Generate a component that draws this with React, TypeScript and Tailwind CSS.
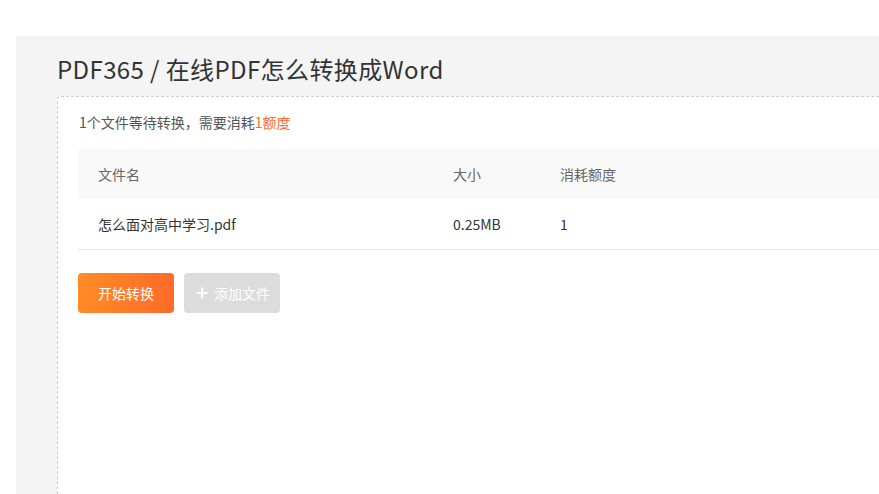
import { Plus } from 'lucide-react';

const font = { fontFamily: '"Noto Sans CJK SC", "Noto Sans", sans-serif' };

interface FileRow {
  name: string;
  size: string;
  cost: number;
}

const files: FileRow[] = [{ name: '怎么面对高中学习.pdf', size: '0.25MB', cost: 1 }];

export default function App() {
  return (
    <div className="w-[879px] h-[494px] overflow-hidden bg-white" style={font}>
      <div className="ml-[16px] mt-[36px] w-[1000px] h-[470px] bg-[#f4f4f4] pl-[41px] flex flex-col">
        {/* Title */}
        <h1 className="mt-[21px] h-[39px] text-[24px] leading-[24px] tracking-[0.4px] text-[#333]">
          PDF365 / 在线PDF怎么转换成Word
        </h1>

        {/* Content box */}
        <div className="flex-1 bg-white border-l border-t border-dashed border-[#ccc] rounded-tl-[4px]">
          <p className="mt-[15px] ml-[21px] text-[14px] leading-[20px] text-[#555]">
            {files.length}个文件等待转换，需要消耗<span className="text-[#ff6a2a]">1额度</span>
          </p>

          <div className="mt-[17px] ml-[20px]">
            <div className="flex h-[50px] items-center bg-[#f9f9f9] text-[14px] text-[#666]">
              <div className="w-[355px] pl-[20px]">文件名</div>
              <div className="w-[107px] pl-[20px]">大小</div>
              <div className="flex-1 pl-[20px]">消耗额度</div>
            </div>
            {files.map((f, i) => (
              <div key={i} className="flex h-[51px] items-center border-b border-[#e8e8e8] text-[14px] text-[#333]">
                <div className="w-[355px] pl-[20px]">{f.name}</div>
                <div className="w-[107px] pl-[20px]">{f.size}</div>
                <div className="flex-1 pl-[20px]">{f.cost}</div>
              </div>
            ))}

            <div className="mt-[23px] flex gap-[10px]">
              <button className="w-[96px] h-[40px] rounded-[4px] bg-gradient-to-r from-[#ff8b25] to-[#ff6a2a] text-white text-[14px]">
                开始转换
              </button>
              <button className="w-[96px] h-[40px] rounded-[4px] bg-[#dcdcdc] text-white text-[14px] flex items-center justify-center gap-[4px]">
                <Plus size={16} strokeWidth={3} />
                添加文件
              </button>
            </div>
          </div>
        </div>
      </div>
    </div>
  );
}
